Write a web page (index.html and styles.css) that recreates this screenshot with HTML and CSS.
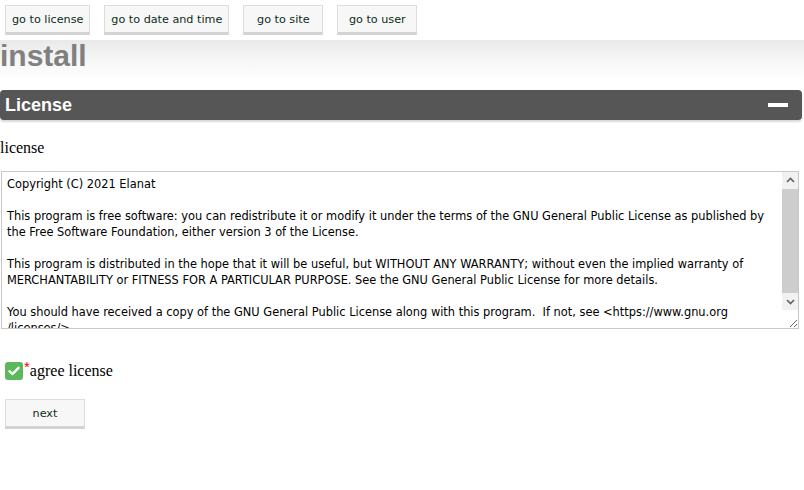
FILE: index.html
```html
<!DOCTYPE html>
<html lang="en">
<head>
    <meta charset="UTF-8">
    <title>install</title>
    <link rel="stylesheet" href="styles.css">
</head>
<body>
    <div class="top-nav">
        <button class="nav-btn">go to license</button>
        <button class="nav-btn">go to date and time</button>
        <button class="nav-btn">go to site</button>
        <button class="nav-btn">go to user</button>
    </div>

    <div class="page-head">
        <h1>install</h1>
    </div>

    <div class="box">
        <div class="box-title">
            <span>License</span>
            <span class="box-toggle"></span>
        </div>
        <div class="box-body">
            <p class="field-label">license</p>
            <div class="textarea-wrap">
                <textarea class="license-text" readonly>Copyright (C) 2021 Elanat

This program is free software: you can redistribute it or modify it under the terms of the GNU General Public License as published by the Free Software Foundation, either version 3 of the License.

This program is distributed in the hope that it will be useful, but WITHOUT ANY WARRANTY; without even the implied warranty of MERCHANTABILITY or FITNESS FOR A PARTICULAR PURPOSE. See the GNU General Public License for more details.

You should have received a copy of the GNU General Public License along with this program.  If not, see &lt;https://www.gnu.org
/licenses/&gt;.</textarea>
                <!-- scrollbar drawn by hand, headless browser hides the real one -->
                <div class="fake-scroll">
                    <span class="scroll-btn">
                        <svg width="9" height="6" viewBox="0 0 9 6"><path d="M1 5 L4.5 1.5 L8 5" fill="none" stroke="#606060" stroke-width="1.6"/></svg>
                    </span>
                    <span class="scroll-thumb"></span>
                    <span class="scroll-btn">
                        <svg width="9" height="6" viewBox="0 0 9 6"><path d="M1 1 L4.5 4.5 L8 1" fill="none" stroke="#606060" stroke-width="1.6"/></svg>
                    </span>
                </div>
            </div>

            <label class="agree">
                <span class="check">
                    <svg width="12" height="10" viewBox="0 0 12 10"><path d="M1.5 5.2 L4.6 8 L10.5 1.8" fill="none" stroke="#fff" stroke-width="2.4" stroke-linecap="round" stroke-linejoin="round"/></svg>
                </span><span class="required">*</span>agree license
            </label>

            <button class="nav-btn next-btn">next</button>
        </div>
    </div>
</body>
</html>
```

FILE: styles.css
```css
body {
    margin: 0;
    font-family: "Liberation Serif", serif;
    font-size: 16px;
    color: #000;
    background: #fff;
}

.top-nav {
    padding: 5px 0 0 5px;
    height: 35px;
    box-sizing: border-box;
}

.nav-btn {
    font-family: "DejaVu Sans", sans-serif;
    font-size: 11.2px;
    color: #0b2d1a;
    background: #f7f7f7;
    border: 1px solid #dcdcdc;
    border-bottom: 3px solid #d3d3d3;
    height: 30px;
    min-width: 80px;
    padding: 0 6px;
    margin: 0 10px 0 0;
    vertical-align: top;
    cursor: pointer;
}

.page-head {
    height: 40px;
    background: linear-gradient(to bottom, #e9e9e9 0%, #f6f6f6 50%, #fff 100%);
    margin-top: 5px;
}

.page-head h1 {
    margin: 0;
    font-family: "Liberation Sans", Arial, sans-serif;
    font-size: 30px;
    font-weight: bold;
    color: #808080;
    line-height: 32px;
}

.box {
    margin-top: 10px;
}

.box-title {
    display: flex;
    justify-content: space-between;
    align-items: center;
    height: 30px;
    margin-right: 2px;
    padding: 0 14px 0 5px;
    background: #565656;
    border-radius: 4px;
    box-shadow: 0 2px 2px #d8d8d8;
    font-family: "Liberation Sans", Arial, sans-serif;
    font-size: 18px;
    font-weight: bold;
    color: #fff;
}

.box-toggle {
    width: 20px;
    height: 4px;
    background: #fff;
}

.box-body {
    padding-top: 18px;
}

.field-label {
    margin: 0 0 13px 0;
    line-height: 20px;
}

.textarea-wrap {
    position: relative;
    width: 798px;
    margin-left: 1px;
}

.license-text {
    display: block;
    width: 798px;
    height: 158px;
    box-sizing: border-box;
    margin: 0;
    padding: 4px 22px 3px 5px;
    border: 1px solid #c8c8c8;
    font-family: "DejaVu Sans", sans-serif;
    font-size: 11.4px;
    line-height: 16px;
    color: #000;
    resize: both;
    overflow: hidden;
}

.fake-scroll {
    position: absolute;
    top: 1px;
    right: 1px;
    width: 16px;
    height: 138px;
    display: flex;
    flex-direction: column;
    background: #f1f1f1;
}

.scroll-btn {
    height: 16px;
    display: flex;
    align-items: center;
    justify-content: center;
    background: #f1f1f1;
}

.scroll-thumb {
    flex: 1;
    margin: 1px 0;
    background: #cdcdcd;
}

.agree {
    display: flex;
    align-items: center;
    margin: 33px 0 0 5px;
    line-height: 18px;
}

.check {
    display: inline-flex;
    align-items: center;
    justify-content: center;
    width: 18px;
    height: 18px;
    background: #5cb85c;
    border-radius: 3px;
}

.required {
    color: #f00;
    font-family: "Liberation Sans", sans-serif;
    font-size: 15px;
    align-self: flex-start;
    margin: -2px 0 0 1px;
    line-height: 14px;
}

.next-btn {
    margin: 19px 0 0 5px;
}
```
